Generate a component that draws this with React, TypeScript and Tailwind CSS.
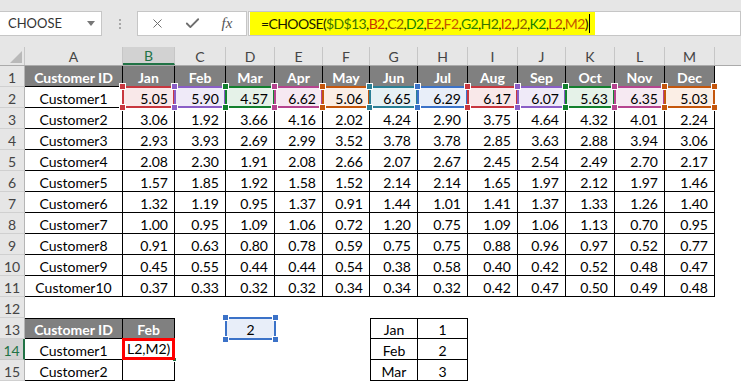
import React from "react";
import { X, Check } from "lucide-react";

type Clr = { b: string; h: string; f: string; t: string };
const C: Record<string, Clr> = {
  red: { b: "border-[#c8373f]", h: "bg-[#c8373f]", f: "bg-[#f9e8e9]", t: "text-[#c83700]" },
  purple: { b: "border-[#8a5ec6]", h: "bg-[#8a5ec6]", f: "bg-[#efeaf8]", t: "text-[#8a5e00]" },
  green: { b: "border-[#13802e]", h: "bg-[#13802e]", f: "bg-[#e5f2e8]", t: "text-[#138000]" },
  magenta: { b: "border-[#b5448f]", h: "bg-[#b5448f]", f: "bg-[#f6e9f2]", t: "text-[#b54400]" },
  orange: { b: "border-[#c4560c]", h: "bg-[#c4560c]", f: "bg-[#fbeee5]", t: "text-[#c45600]" },
  teal: { b: "border-[#2a7f95]", h: "bg-[#2a7f95]", f: "bg-[#e6f1f4]", t: "text-[#2a7f00]" },
  blue: { b: "border-[#3b72c8]", h: "bg-[#3b72c8]", f: "bg-[#e8eef9]", t: "text-[#3b7200]" },
};
const seq = [C.red, C.purple, C.green, C.magenta, C.orange, C.teal, C.blue, C.red, C.purple, C.green, C.magenta, C.orange];
const letters = ["B", "C", "D", "E", "F", "G", "H", "I", "J", "K", "L", "M"];
const months = ["Jan", "Feb", "Mar", "Apr", "May", "Jun", "Jul", "Aug", "Sep", "Oct", "Nov", "Dec"];

const data: [string, string[]][] = [
  ["Customer1", ["5.05", "5.90", "4.57", "6.62", "5.06", "6.65", "6.29", "6.17", "6.07", "5.63", "6.35", "5.03"]],
  ["Customer2", ["3.06", "1.92", "3.66", "4.16", "2.02", "4.24", "2.90", "3.75", "4.64", "4.32", "4.01", "2.24"]],
  ["Customer3", ["2.93", "3.93", "2.69", "2.99", "3.52", "3.78", "3.78", "2.85", "3.63", "2.88", "3.94", "3.06"]],
  ["Customer4", ["2.08", "2.30", "1.91", "2.08", "2.66", "2.07", "2.67", "2.45", "2.54", "2.49", "2.70", "2.17"]],
  ["Customer5", ["1.57", "1.85", "1.92", "1.58", "1.52", "2.14", "2.14", "1.65", "1.97", "2.12", "1.97", "1.46"]],
  ["Customer6", ["1.32", "1.19", "0.95", "1.37", "0.91", "1.44", "1.01", "1.41", "1.37", "1.33", "1.26", "1.40"]],
  ["Customer7", ["1.00", "0.95", "1.09", "1.06", "0.72", "1.20", "0.75", "1.09", "1.06", "1.13", "0.70", "0.95"]],
  ["Customer8", ["0.91", "0.63", "0.80", "0.78", "0.59", "0.75", "0.75", "0.88", "0.96", "0.97", "0.52", "0.77"]],
  ["Customer9", ["0.45", "0.55", "0.44", "0.44", "0.54", "0.38", "0.58", "0.40", "0.42", "0.52", "0.48", "0.47"]],
  ["Customer10", ["0.37", "0.33", "0.32", "0.32", "0.34", "0.34", "0.32", "0.42", "0.47", "0.50", "0.49", "0.48"]],
];

const GRID = "grid grid-cols-[25px_98px_52px_51px_49px_48px_47px_48px_50px_50px_48px_49px_50px_50px_26px]";

function RefBox({ c }: { c: Clr }) {
  return (
    <div className={`absolute -inset-px z-10 border-2 pointer-events-none ${c.b}`}>
      <span className={`absolute -left-[5px] -top-[5px] w-[7px] h-[7px] border border-white ${c.h}`} />
      <span className={`absolute -right-[5px] -top-[5px] w-[7px] h-[7px] border border-white ${c.h}`} />
      <span className={`absolute -left-[5px] -bottom-[5px] w-[7px] h-[7px] border border-white ${c.h}`} />
      <span className={`absolute -right-[5px] -bottom-[5px] w-[7px] h-[7px] border border-white ${c.h}`} />
    </div>
  );
}

function RowHead({ n, sel }: { n: number; sel?: boolean }) {
  return (
    <div
      className={
        sel
          ? "h-[21px] bg-[#d2d2d2] text-[#217346] border-b border-b-[#c6c6c6] border-r-2 border-r-[#217346] flex items-end justify-center pb-[1px]"
          : "h-[21px] bg-[#e6e6e6] text-[#444] border-b border-b-[#d0d0d0] border-r border-r-[#b5b5b5] flex items-end justify-center pb-[1px]"
      }
    >
      {n}
    </div>
  );
}

const tCell = "h-[21px] border-r border-b border-black flex items-end pb-[1px]";
const hdrCell = "h-[21px] border-r border-b border-black flex items-end justify-center pb-[1px] bg-[#808080] text-white font-bold";
const empty = "h-[21px]";

export default function App() {
  return (
    <div className="w-[741px] h-[382px] overflow-hidden bg-white text-[14px] leading-[15px] [font-family:Lato,'Noto_Sans',sans-serif] text-black">
      {/* Top bar */}
      <div className="h-[47px] bg-[#e6e6e6] flex items-start pt-[11px]">
        <div className="w-[102px] h-[25px] bg-white border border-[#c6c6c6] border-l-0 flex items-center pl-[8px] pr-[6px] text-[13px] text-[#333]">
          <span className="flex-1">CHOOSE</span>
          <svg width="8" height="5" viewBox="0 0 8 5"><polygon points="0,0 8,0 4,5" fill="#777" /></svg>
        </div>
        <div className="w-[35px] h-[25px] flex flex-col items-center justify-center gap-[2px]">
          <span className="w-[2px] h-[2px] bg-[#a8a8a8]" />
          <span className="w-[2px] h-[2px] bg-[#a8a8a8]" />
          <span className="w-[2px] h-[2px] bg-[#a8a8a8]" />
        </div>
        <div className="w-[110px] h-[25px] bg-white border border-[#c6c6c6] flex items-center text-[#6e6e6e]">
          <div className="w-[38px] flex justify-center"><X size={15} strokeWidth={1.6} /></div>
          <div className="w-[32px] flex justify-center"><Check size={17} strokeWidth={2.6} /></div>
          <div className="w-[38px] flex justify-center [font-family:'Liberation_Serif',serif] italic text-[15px] text-[#555]">fx</div>
        </div>
        <div className="flex-1 h-[25px] ml-[1px] bg-white border border-[#c6c6c6] flex items-stretch">
          <div className="bg-[#ffff00] ml-[1px] pl-[11px] pr-[5px] flex items-center text-[14px] tracking-[-0.62px] text-[#1a1a00]">
            <span>=CHOOSE(</span>
            <span className={C.blue.t}>$D$13</span>
            <span>,</span>
            {letters.map((l, i) => (
              <React.Fragment key={l}>
                <span className={seq[i].t}>{l}2</span>
                <span>{i === 11 ? ")" : ","}</span>
              </React.Fragment>
            ))}
            <span className="w-px h-[19px] bg-black ml-[1px]" />
          </div>
        </div>
      </div>

      {/* Column header */}
      <div className={`${GRID} h-[19px] bg-[#e6e6e6] border-b border-[#ababab] text-[#444]`}>
        <div className="border-r border-[#c6c6c6] flex items-end justify-end pr-[2px] pb-[2px]">
          <svg width="12" height="12" viewBox="0 0 12 12"><polygon points="12,0 12,12 0,12" fill="#b9b9b9" /></svg>
        </div>
        {["A", ...letters].map((l) =>
          l === "B" ? (
            <div key={l} className="bg-[#d2d2d2] text-[#217346] border-r border-[#c6c6c6] border-b-2 border-b-[#217346] flex items-center justify-center">{l}</div>
          ) : (
            <div key={l} className="border-r border-[#c6c6c6] flex items-center justify-center">{l}</div>
          )
        )}
        <div />
      </div>

      {/* Row 1 */}
      <div className={GRID}>
        <RowHead n={1} />
        <div className={hdrCell}>Customer ID</div>
        {months.map((m) => (
          <div key={m} className={hdrCell}>{m}</div>
        ))}
        <div className={empty} />
      </div>

      {/* Rows 2-11 */}
      {data.map(([name, vals], r) => (
        <div key={name} className={GRID}>
          <RowHead n={r + 2} />
          <div className={`${tCell} justify-center`}>{name}</div>
          {vals.map((v, i) =>
            r === 0 ? (
              <div key={i} className={`${tCell} justify-end pr-[6px] relative ${seq[i].f}`}>
                {v}
                <RefBox c={seq[i]} />
              </div>
            ) : (
              <div key={i} className={`${tCell} justify-end pr-[6px]`}>{v}</div>
            )
          )}
          <div className={empty} />
        </div>
      ))}

      {/* Row 12 */}
      <div className={GRID}>
        <RowHead n={12} />
        {Array.from({ length: 14 }).map((_, i) => (
          <div key={i} className={empty} />
        ))}
      </div>

      {/* Row 13 */}
      <div className={GRID}>
        <RowHead n={13} />
        <div className={`${hdrCell} border-t`}>Customer ID</div>
        <div className={`${hdrCell} border-t`}>Feb</div>
        <div className={empty} />
        <div className={`${empty} relative flex items-end justify-center pb-[2px] ${C.blue.f}`}>
          2
          <RefBox c={C.blue} />
        </div>
        <div className={empty} />
        <div className={empty} />
        <div className={`${tCell} border-t border-l justify-center`}>Jan</div>
        <div className={`${tCell} border-t justify-center`}>1</div>
        {Array.from({ length: 6 }).map((_, i) => (
          <div key={i} className={empty} />
        ))}
      </div>

      {/* Row 14 */}
      <div className={GRID}>
        <RowHead n={14} sel />
        <div className={`${tCell} justify-center`}>Customer1</div>
        <div className={`${tCell} relative`}>
          <span className="absolute -right-[3px] -bottom-[3px] w-[5px] h-[5px] bg-[#217346] border border-white" />
          <div className="absolute -left-px -top-px -right-px -bottom-px z-10 border-[3px] border-[#ff0000] flex items-end pl-[2px] pb-[1px] overflow-hidden">
            L2,M2)
          </div>
        </div>
        <div className={empty} />
        <div className={empty} />
        <div className={empty} />
        <div className={empty} />
        <div className={`${tCell} border-l justify-center`}>Feb</div>
        <div className={`${tCell} justify-center`}>2</div>
        {Array.from({ length: 6 }).map((_, i) => (
          <div key={i} className={empty} />
        ))}
      </div>

      {/* Row 15 */}
      <div className={GRID}>
        <RowHead n={15} />
        <div className={`${tCell} justify-center`}>Customer2</div>
        <div className={tCell} />
        <div className={empty} />
        <div className={empty} />
        <div className={empty} />
        <div className={empty} />
        <div className={`${tCell} border-l justify-center`}>Mar</div>
        <div className={`${tCell} justify-center`}>3</div>
        {Array.from({ length: 6 }).map((_, i) => (
          <div key={i} className={empty} />
        ))}
      </div>
    </div>
  );
}
